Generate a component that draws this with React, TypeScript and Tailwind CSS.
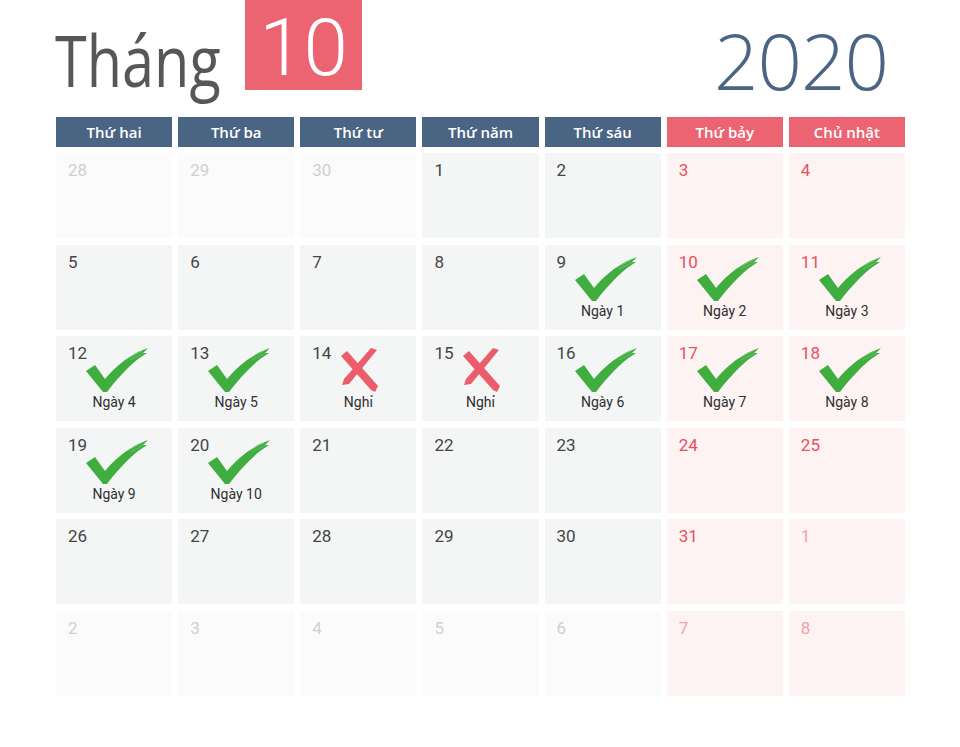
import React from "react";

type Mark = "check" | "x";
type Cell = { n: number; out?: boolean; label?: string; mark?: Mark };

const headers = ["Thứ hai", "Thứ ba", "Thứ tư", "Thứ năm", "Thứ sáu", "Thứ bảy", "Chủ nhật"];

const rows: Cell[][] = [
  [{ n: 28, out: true }, { n: 29, out: true }, { n: 30, out: true }, { n: 1 }, { n: 2 }, { n: 3 }, { n: 4 }],
  [
    { n: 5 },
    { n: 6 },
    { n: 7 },
    { n: 8 },
    { n: 9, mark: "check", label: "Ngày 1" },
    { n: 10, mark: "check", label: "Ngày 2" },
    { n: 11, mark: "check", label: "Ngày 3" },
  ],
  [
    { n: 12, mark: "check", label: "Ngày 4" },
    { n: 13, mark: "check", label: "Ngày 5" },
    { n: 14, mark: "x", label: "Nghỉ" },
    { n: 15, mark: "x", label: "Nghỉ" },
    { n: 16, mark: "check", label: "Ngày 6" },
    { n: 17, mark: "check", label: "Ngày 7" },
    { n: 18, mark: "check", label: "Ngày 8" },
  ],
  [
    { n: 19, mark: "check", label: "Ngày 9" },
    { n: 20, mark: "check", label: "Ngày 10" },
    { n: 21 },
    { n: 22 },
    { n: 23 },
    { n: 24 },
    { n: 25 },
  ],
  [{ n: 26 }, { n: 27 }, { n: 28 }, { n: 29 }, { n: 30 }, { n: 31 }, { n: 1, out: true }],
  [
    { n: 2, out: true },
    { n: 3, out: true },
    { n: 4, out: true },
    { n: 5, out: true },
    { n: 6, out: true },
    { n: 7, out: true },
    { n: 8, out: true },
  ],
];

function Check() {
  return (
    <svg width="62" height="44" viewBox="0 0 62 44" className="ml-[6px]">
      <path
        d="M0 23 L9 17 L19 31 C28 20 40 10 52 4 L62 0 L57 5 L61 5 L52 11 C41 20 30 32 21 44 L17 44 Z"
        fill="#3fae3f"
      />
      <path d="M40 11 L56 3" stroke="#fff" strokeOpacity="0.35" strokeWidth="0.8" />
      <path d="M44 12 L58 5" stroke="#fff" strokeOpacity="0.3" strokeWidth="0.7" />
    </svg>
  );
}

function Cross() {
  return (
    <svg width="37" height="44" viewBox="0 0 37 44" className="ml-[3px]">
      <path d="M0 8 L6 3 L37 38 L34 44 L30 42 Z" fill="#ec5d6b" />
      <path d="M30 0 L36 2 L8 36 L1 37 L3 31 Z" fill="#ec5d6b" />
    </svg>
  );
}

function DayCell({ cell, weekend }: { cell: Cell; weekend: boolean }) {
  const bg = weekend ? "bg-[#fdf3f3]" : cell.out ? "bg-[#fbfbfc]" : "bg-[#f4f6f6]";
  const color = weekend
    ? cell.out
      ? "text-[#f0a2ab]"
      : "text-[#e8505e]"
    : cell.out
    ? "text-[#cfcfd2]"
    : "text-[#444444]";
  return (
    <div className={`grid h-[85px] ${bg}`}>
      <div className={`[grid-area:1/1] pl-[12px] pt-[7px] text-[17px] leading-[20px] ${color}`}>{cell.n}</div>
      {cell.mark && (
        <div className="[grid-area:1/1] flex flex-col items-center pt-[12px]">
          {cell.mark === "check" ? <Check /> : <Cross />}
          <div className="mt-[1px] text-[14px] leading-[18px] text-[#2f2f2f]">{cell.label}</div>
        </div>
      )}
    </div>
  );
}

export default function App() {
  return (
    <div className="w-[960px] h-[747px] bg-white" style={{ fontFamily: "Roboto, 'Open Sans', sans-serif" }}>
      <div className="flex h-[117px] items-start">
        <div className="ml-[55px] mt-[23px] w-[190px] overflow-visible">
          <span
            className="inline-block origin-left scale-x-[0.8] whitespace-nowrap text-[72px] leading-none text-[#555758]"
            style={{ fontFamily: "'Open Sans', sans-serif" }}
          >
            Tháng
          </span>
        </div>
        <div className="flex h-[90px] w-[117px] items-start justify-center bg-[#ec6472]">
          <span
            className="mt-[8px] text-[80px] font-light leading-[80px] text-white"
            style={{ fontFamily: "Roboto, sans-serif" }}
          >
            10
          </span>
        </div>
        <div className="flex-1" />
        <div
          className="mr-[72px] mt-[21px] text-[78px] font-light leading-none tracking-[-1px] text-[#4a6584]"
          style={{ fontFamily: "'Open Sans', sans-serif" }}
        >
          2020
        </div>
      </div>
      <div className="ml-[56px] w-[849px]">
        <div className="grid grid-cols-7 gap-x-[6px]">
          {headers.map((h, i) => (
            <div
              key={h}
              className={`flex h-[30px] items-center justify-center text-[15px] font-semibold text-white ${
                i >= 5 ? "bg-[#ec6472]" : "bg-[#4a6584]"
              }`}
              style={{ fontFamily: "'Open Sans', sans-serif" }}
            >
              {h}
            </div>
          ))}
        </div>
        <div className="mt-[6px] grid grid-cols-7 gap-x-[6px] gap-y-[6.6px]">
          {rows.flatMap((r, ri) =>
            r.map((c, ci) => <DayCell key={`${ri}-${ci}`} cell={c} weekend={ci >= 5} />)
          )}
        </div>
      </div>
    </div>
  );
}
